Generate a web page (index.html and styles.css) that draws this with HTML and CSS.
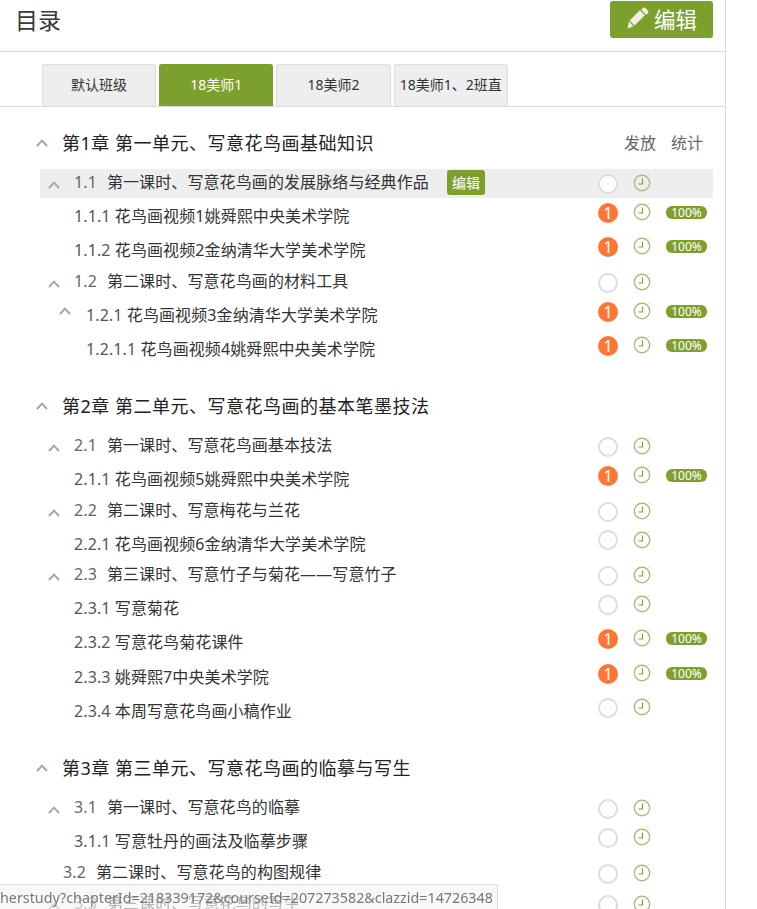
FILE: index.html
```html
<!DOCTYPE html>
<html lang="zh-CN">
<head>
<meta charset="utf-8">
<title>目录</title>
<link rel="stylesheet" href="styles.css">
</head>
<body>
<svg class="defs" width="0" height="0" aria-hidden="true">
  <symbol id="clock" viewBox="0 0 18 18">
    <circle cx="9" cy="9" r="7.7" fill="none" stroke="#a5bf78" stroke-width="1.4"/>
    <path d="M9.5 4.5V10H5.5" fill="none" stroke="#7f9f3a" stroke-width="1.2"/>
    <rect x="15.5" y="0.5" width="1" height="1" fill="#e9b48c"/>
  </symbol>
  <symbol id="arrow" viewBox="0 0 12 8">
    <path d="M1 7L6 1.6L11 7" fill="none" stroke="#a6a6a6" stroke-width="2"/>
  </symbol>
</svg>
<main class="page">
  <header class="top">
    <h1 class="title">目录</h1>
    <button class="edit-main">
      <svg class="pencil" viewBox="0 0 22 22" width="22" height="22"><path d="M15.8 1.2a2 2 0 0 1 2.8 0l2.2 2.2a2 2 0 0 1 0 2.8l-1.6 1.6-5-5zM12.9 3.2l5 5L7.6 18.5l-5-5zM1.9 14.6l4.6 4.6L.6 21.4z" fill="#eef1e2"/></svg>
      编辑
    </button>
  </header>
  <nav class="tabs">
    <a class="tab">默认班级</a>
    <a class="tab active">18美师1</a>
    <a class="tab">18美师2</a>
    <a class="tab">18美师1、2班直</a>
  </nav>
  <section class="catalog">
    <div class="chapter first">
      <svg class="arrow"><use href="#arrow"/></svg>
      <span class="ch-title">第1章 第一单元、写意花鸟画基础知识</span>
      <span class="col-head">发放</span><span class="col-head">统计</span>
    </div>
    <div class="row sec hl">
      <svg class="arrow"><use href="#arrow"/></svg>
      <span class="label"><span class="num">1.1</span>第一课时、写意花鸟画的发展脉络与经典作品</span>
      <a class="mini-edit">编辑</a>
      <span class="dot"></span><svg class="clock"><use href="#clock"/></svg><span class="pct none"></span>
    </div>
    <div class="row leaf">
      <span class="label"><span class="n2">1.1.1</span> 花鸟画视频1姚舜熙中央美术学院</span>
      <span class="dot on">1</span><svg class="clock"><use href="#clock"/></svg><span class="pct">100%</span>
    </div>
    <div class="row leaf">
      <span class="label"><span class="n2">1.1.2</span> 花鸟画视频2金纳清华大学美术学院</span>
      <span class="dot on">1</span><svg class="clock"><use href="#clock"/></svg><span class="pct">100%</span>
    </div>
    <div class="row sec">
      <svg class="arrow"><use href="#arrow"/></svg>
      <span class="label"><span class="num">1.2</span>第二课时、写意花鸟画的材料工具</span>
      <span class="dot"></span><svg class="clock"><use href="#clock"/></svg><span class="pct none"></span>
    </div>
    <div class="row leaf deep">
      <svg class="arrow"><use href="#arrow"/></svg>
      <span class="label"><span class="n2">1.2.1</span> 花鸟画视频3金纳清华大学美术学院</span>
      <span class="dot on">1</span><svg class="clock"><use href="#clock"/></svg><span class="pct">100%</span>
    </div>
    <div class="row leaf deeper">
      <span class="label"><span class="n2">1.2.1.1</span> 花鸟画视频4姚舜熙中央美术学院</span>
      <span class="dot on">1</span><svg class="clock"><use href="#clock"/></svg><span class="pct">100%</span>
    </div>

    <div class="chapter">
      <svg class="arrow"><use href="#arrow"/></svg>
      <span class="ch-title">第2章 第二单元、写意花鸟画的基本笔墨技法</span>
    </div>
    <div class="row sec">
      <svg class="arrow"><use href="#arrow"/></svg>
      <span class="label"><span class="num">2.1</span>第一课时、写意花鸟画基本技法</span>
      <span class="dot"></span><svg class="clock"><use href="#clock"/></svg><span class="pct none"></span>
    </div>
    <div class="row leaf">
      <span class="label"><span class="n2">2.1.1</span> 花鸟画视频5姚舜熙中央美术学院</span>
      <span class="dot on">1</span><svg class="clock"><use href="#clock"/></svg><span class="pct">100%</span>
    </div>
    <div class="row sec">
      <svg class="arrow"><use href="#arrow"/></svg>
      <span class="label"><span class="num">2.2</span>第二课时、写意梅花与兰花</span>
      <span class="dot"></span><svg class="clock"><use href="#clock"/></svg><span class="pct none"></span>
    </div>
    <div class="row leaf tight">
      <span class="label"><span class="n2">2.2.1</span> 花鸟画视频6金纳清华大学美术学院</span>
      <span class="dot"></span><svg class="clock"><use href="#clock"/></svg><span class="pct none"></span>
    </div>
    <div class="row sec">
      <svg class="arrow"><use href="#arrow"/></svg>
      <span class="label"><span class="num">2.3</span>第三课时、写意竹子与菊花——写意竹子</span>
      <span class="dot"></span><svg class="clock"><use href="#clock"/></svg><span class="pct none"></span>
    </div>
    <div class="row leaf">
      <span class="label"><span class="n2">2.3.1</span> 写意菊花</span>
      <span class="dot"></span><svg class="clock"><use href="#clock"/></svg><span class="pct none"></span>
    </div>
    <div class="row leaf tall">
      <span class="label"><span class="n2">2.3.2</span> 写意花鸟菊花课件</span>
      <span class="dot on">1</span><svg class="clock"><use href="#clock"/></svg><span class="pct">100%</span>
    </div>
    <div class="row leaf">
      <span class="label"><span class="n2">2.3.3</span> 姚舜熙7中央美术学院</span>
      <span class="dot on">1</span><svg class="clock"><use href="#clock"/></svg><span class="pct">100%</span>
    </div>
    <div class="row leaf">
      <span class="label"><span class="n2">2.3.4</span> 本周写意花鸟画小稿作业</span>
      <span class="dot"></span><svg class="clock"><use href="#clock"/></svg><span class="pct none"></span>
    </div>

    <div class="chapter">
      <svg class="arrow"><use href="#arrow"/></svg>
      <span class="ch-title">第3章 第三单元、写意花鸟画的临摹与写生</span>
    </div>
    <div class="row sec">
      <svg class="arrow"><use href="#arrow"/></svg>
      <span class="label"><span class="num">3.1</span>第一课时、写意花鸟的临摹</span>
      <span class="dot"></span><svg class="clock"><use href="#clock"/></svg><span class="pct none"></span>
    </div>
    <div class="row leaf">
      <span class="label"><span class="n2">3.1.1</span> 写意牡丹的画法及临摹步骤</span>
      <span class="dot"></span><svg class="clock"><use href="#clock"/></svg><span class="pct none"></span>
    </div>
    <div class="row sec flat">
      <span class="label"><span class="num">3.2</span>第二课时、写意花鸟的构图规律</span>
      <span class="dot"></span><svg class="clock"><use href="#clock"/></svg><span class="pct none"></span>
    </div>
    <div class="row sec">
      <svg class="arrow"><use href="#arrow"/></svg>
      <span class="label"><span class="num">3.3</span>第三课时、写意花鸟的写生</span>
      <span class="dot"></span><svg class="clock"><use href="#clock"/></svg><span class="pct none"></span>
    </div>
  </section>
</main>
<div class="statusbar"><span>herstudy?chapterId=218339172&amp;courseId=207273582&amp;clazzid=14726348</span></div>
</body>
</html>
```
FILE: styles.css
```css
html, body {
  margin: 0;
  height: 909px;
  overflow: hidden;
  background: #fff;
}
body {
  font-family: "Noto Sans", "Noto Sans CJK SC", sans-serif;
  color: #333;
}
.defs { position: absolute; }
.page {
  width: 725px;
  height: 909px;
  border-right: 1px solid #d9d9d9;
  overflow: hidden;
}
.top {
  height: 50px;
  border-bottom: 1px solid #d9d9d9;
  display: flex;
  justify-content: space-between;
  align-items: flex-start;
  padding: 1px 12px 0 15px;
}
.title {
  margin: 0;
  font-size: 23px;
  font-weight: 400;
  line-height: 38px;
  color: #3a3a3a;
}
.edit-main {
  width: 103px;
  height: 37px;
  border: 0;
  border-radius: 3px;
  background: #7ca02e;
  color: #fff;
  font: 400 21.5px/37px "Noto Sans", "Noto Sans CJK SC", sans-serif;
  padding: 0 0 0 17px;
  display: flex;
  align-items: center;
  gap: 5px;
}
.pencil { flex: none; margin-top: -3px; }
.tabs {
  height: 42px;
  padding: 12px 0 0 42px;
  border-bottom: 1px solid #d9d9d9;
  display: flex;
  gap: 3px;
}
.tab {
  width: 114.2px;
  box-sizing: border-box;
  height: 42px;
  background: #eee;
  border: 1px solid #ddd;
  border-bottom: 0;
  border-radius: 3px 3px 0 0;
  font-size: 14px;
  line-height: 40px;
  text-align: center;
  color: #333;
  white-space: nowrap;
}
.tab.active {
  background: #7ca02e;
  border-color: #7ca02e;
  color: #fff;
}
.catalog {
  margin: 0 12px 0 40px;
  padding-top: 22px;
}
.chapter {
  height: 40px;
  margin-top: 25px;
  display: flex;
  align-items: flex-start;
  line-height: 28px;
}
.chapter.first { margin-top: 0; }
.chapter .arrow { margin: 10px 14px 0 -4px; }
.ch-title {
  flex: 1;
  font-size: 18px;
  letter-spacing: 0.5px;
  color: #222;
}
.col-head {
  font-size: 16px;
  color: #666;
  margin-left: 15px;
}
.col-head:last-child { margin-right: 10px; }
.arrow {
  width: 12px;
  height: 8px;
  flex: none;
}
.row {
  display: flex;
  align-items: flex-start;
  font-size: 16px;
  white-space: nowrap;
}
.sec {
  height: 29px;
  margin-bottom: 2px;
  line-height: 26px;
  padding-left: 8px;
}
.sec.flat { padding-left: 23px; }
.sec .arrow { margin: 12px 14px 0 0; }
.sec .dot { margin-top: 5px; }
.sec .clock { margin-top: 5px; }
.hl { background: #eee; }
.leaf {
  height: 34px;
  line-height: 32px;
  padding-left: 34px;
}
.leaf.tight { height: 33px; }
.leaf.tall { height: 35px; }
.leaf.deep { padding-left: 19px; }
.leaf.deep .arrow { margin: 8px 15px 0 0; }
.leaf.deeper { padding-left: 46px; }
.leaf .dot, .leaf .clock { margin-top: 3px; }
.leaf.tight .dot { margin-top: 2px; }
.label {
  flex: 1;
  min-width: 0;
  color: #333;
  letter-spacing: 0.1px;
}
.hl .label { flex: none; }
.num {
  color: #666;
  margin-right: 10px;
}
.n2 { color: #555; }
.mini-edit {
  width: 38px;
  height: 25px;
  margin: 1px auto 0 18px;
  background: #7ca02e;
  border-radius: 3px;
  color: #fff;
  font-size: 14px;
  line-height: 25px;
  text-align: center;
}
.dot {
  width: 20px;
  height: 20px;
  box-sizing: border-box;
  border: 2px solid #ddd;
  border-radius: 50%;
  background: #fff;
  flex: none;
  font-size: 16px;
  line-height: 20px;
  text-align: center;
  color: #fff;
}
.dot.on {
  border: 0;
  background: #ff7637;
}
.clock {
  width: 18px;
  height: 18px;
  flex: none;
  margin-left: 15px;
}
.pct {
  width: 41px;
  height: 13px;
  flex: none;
  margin: 6px 6px 0 15px;
  border-radius: 6px;
  background: #7f9f2f;
  color: #fff;
  font-size: 12px;
  line-height: 13px;
  text-align: center;
}
.pct.none { background: none; }
.statusbar {
  position: fixed;
  left: 0;
  bottom: 0;
  width: 498px;
  height: 25px;
  box-sizing: border-box;
  padding-right: 5px;
  background: rgba(245, 245, 245, 0.68);
  border-top: 1px solid #ddd;
  border-right: 1px solid #ddd;
  color: #777;
  font-size: 14.3px;
  line-height: 25px;
  text-align: right;
  overflow: hidden;
  white-space: nowrap;
}
```
